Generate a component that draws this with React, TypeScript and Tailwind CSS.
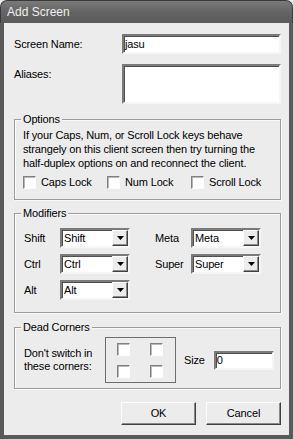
import React from 'react';

function Sunken({ className = '', children }: { className?: string; children?: React.ReactNode }) {
  return (
    <div
      className={`bg-white border-2 border-t-[#7a7a7a] border-l-[#7a7a7a] border-b-[#f6f6f6] border-r-[#f6f6f6] shadow-[inset_1px_1px_0_#505050] ${className}`}
    >
      {children}
    </div>
  );
}

function Check() {
  return (
    <div className="w-[13px] h-[13px] shrink-0 bg-white border border-t-[#808080] border-l-[#808080] border-b-[#fdfdfd] border-r-[#fdfdfd] shadow-[inset_1px_1px_0_#b8b8b8]" />
  );
}

function Combo({ value }: { value: string }) {
  return (
    <Sunken className="w-[70px] h-[20px] flex items-center justify-between">
      <span className="pl-[2px] leading-none">{value}</span>
      <div className="w-[16px] h-[16px] bg-[#ececec] border border-t-[#fdfdfd] border-l-[#fdfdfd] border-b-[#404040] border-r-[#404040] shadow-[inset_-1px_-1px_0_#8a8a8a] flex items-center justify-center">
        <svg width="7" height="4" viewBox="0 0 7 4">
          <path d="M0 0h7L3.5 4z" fill="#000" />
        </svg>
      </div>
    </Sunken>
  );
}

function Group({ title, className = '', children }: { title: string; className?: string; children: React.ReactNode }) {
  return (
    <div className={`relative border border-[#9c9c9c] shadow-[inset_1px_1px_0_#fafafa,1px_1px_0_#fafafa] ${className}`}>
      <span className="absolute -top-[8px] left-[6px] px-[2px] bg-[#ececec] leading-[14px]">{title}</span>
      {children}
    </div>
  );
}

function Button({ label }: { label: string }) {
  return (
    <button className="w-[75px] h-[23px] bg-[#ececec] border border-t-[#fdfdfd] border-l-[#fdfdfd] border-b-[#404040] border-r-[#404040] shadow-[inset_-1px_-1px_0_#8a8a8a] text-[11px]">
      {label}
    </button>
  );
}

export default function App() {
  return (
    <div className="w-[293px] h-[439px] flex flex-col font-['Liberation_Sans',Arial,sans-serif] text-[11px] tracking-[-0.15px] text-black bg-[#ececec]">
      {/* Title bar */}
      <div className="h-[23px] shrink-0 rounded-t-[7px] border border-b-0 border-[#3a3a3a] bg-gradient-to-b from-[#7a7a7a] via-[#646464] to-[#5a5a5a] flex items-center px-[6px]">
        <span className="text-[12px] tracking-normal text-[#efefef]">Add Screen</span>
      </div>

      <div className="flex-1 flex flex-col border-x-4 border-b-4 border-[#5a5a5a] pl-[10px] pr-[8px] pt-[11px]">
        {/* Screen name */}
        <div className="flex items-center">
          <span className="w-[108px]">Screen Name:</span>
          <Sunken className="w-[159px] h-[20px] flex items-center">
            <span className="pl-[1px] leading-none">jasu</span>
          </Sunken>
        </div>

        {/* Aliases */}
        <div className="flex items-start mt-[10px]">
          <span className="w-[108px] pt-[2px]">Aliases:</span>
          <Sunken className="w-[159px] h-[40px]" />
        </div>

        {/* Options */}
        <Group title="Options" className="mt-[15px] pl-[8px] pt-[8px] pb-[10px]">
          <p className="leading-[14px] whitespace-nowrap">
            If your Caps, Num, or Scroll Lock keys behave
            <br />
            strangely on this client screen then try turning the
            <br />
            half-duplex options on and reconnect the client.
          </p>
          <div className="mt-[6px] grid grid-cols-[84px_84px_auto]">
            {['Caps Lock', 'Num Lock', 'Scroll Lock'].map(l => (
              <label key={l} className="flex items-center gap-[5px] leading-[13px]">
                <Check />
                {l}
              </label>
            ))}
          </div>
        </Group>

        {/* Modifiers */}
        <Group title="Modifiers" className="mt-[13px] pl-[9px] pt-[14px] pb-[12px] flex gap-[25px]">
          <div className="flex flex-col gap-[6px]">
            {['Shift', 'Ctrl', 'Alt'].map(m => (
              <div key={m} className="flex items-center">
                <span className="w-[36px]">{m}</span>
                <Combo value={m} />
              </div>
            ))}
          </div>
          <div className="flex flex-col gap-[6px]">
            {['Meta', 'Super'].map(m => (
              <div key={m} className="flex items-center">
                <span className="w-[36px]">{m}</span>
                <Combo value={m} />
              </div>
            ))}
          </div>
        </Group>

        {/* Dead corners */}
        <Group title="Dead Corners" className="mt-[14px] pl-[9px] pt-[9px] pb-[5px] flex items-center">
          <div className="w-[81px] leading-[13px]">
            Don't switch in
            <br />
            these corners:
          </div>
          <div className="w-[71px] h-[46px] border border-[#6e6e6e] grid grid-cols-[13px_13px] grid-rows-[13px_13px] gap-x-[20px] gap-y-[9px] pl-[11px] pt-[5px]">
            <Check />
            <Check />
            <Check />
            <Check />
          </div>
          <span className="ml-[8px]">Size</span>
          <Sunken className="ml-[9px] w-[60px] h-[19px] flex items-center">
            <span className="pl-[1px] leading-none">0</span>
          </Sunken>
        </Group>

        {/* Buttons */}
        <div className="mt-[13px] flex justify-end gap-[10px]">
          <Button label="OK" />
          <Button label="Cancel" />
        </div>
      </div>
    </div>
  );
}
